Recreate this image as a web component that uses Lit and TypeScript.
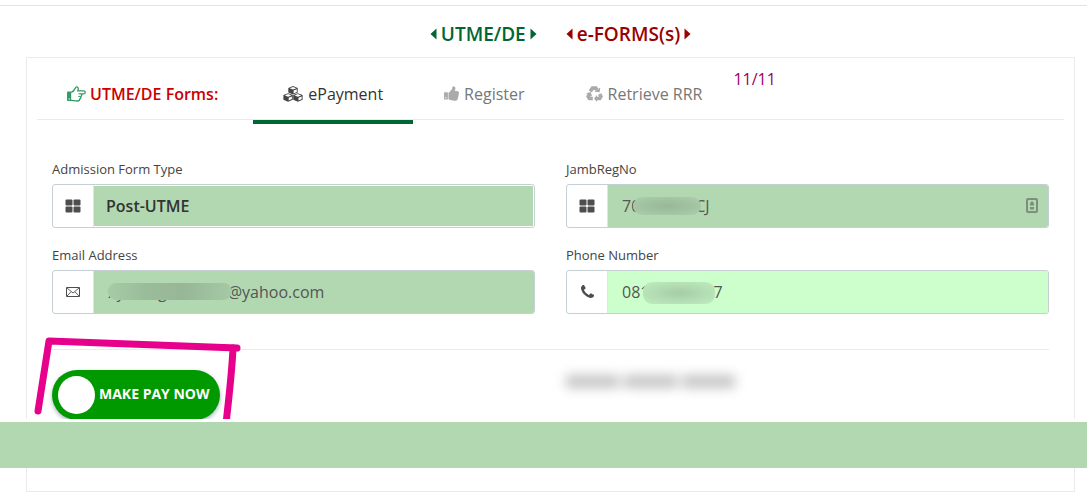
import { LitElement, html, css, svg, nothing, TemplateResult } from "lit";
import { customElement, property } from "lit/decorators.js";

const icons: Record<string, TemplateResult> = {
  hand: html`<svg viewBox="0 0 19 16" width="19" height="16" fill="none" stroke="currentColor" stroke-width="1.3" stroke-linejoin="round" aria-hidden="true">
    <path d="M0.7 6.2H4.2V14.6H0.7z" fill="currentColor" stroke="none"/>
    <path d="M0.7 6.2H4.6C6.4 5.8 7.6 3.6 8.2 2.4C8.6 1 9.3 0.7 10 0.8C11.6 1.1 11.5 3.3 10.7 4.9H16.6C18.8 4.9 18.8 7.8 16.6 7.8H14.2C15.1 8.9 14.7 10 13.7 10.5C14.2 11.6 13.7 12.4 12.8 12.8C12.8 14.3 11.9 15 10.4 15C7.6 15 6.3 14.4 4.2 14.3H0.7z"/>
    <path d="M11.4 7.8H14.2M11.2 10.4h2.5" stroke-width="1"/>
    <circle cx="2.2" cy="13" r="0.7" fill="#fff" stroke="none"/>
  </svg>`,
  cubes: html`<svg viewBox="0 0 20 16" width="20" height="16" aria-hidden="true">
    ${[[5.1, 0], [0.2, 7.2], [10, 7.2]].map(
      ([x, y]) => svg`<g transform=${`translate(${x} ${y})`}>
        <path d="M4.9 0L9.6 1.9V6.5L4.9 8.6L0.2 6.5V1.9z" fill="currentColor"/>
        <path d="M4.9 0.9L8.2 2.2L4.9 3.600L1.600 2.2z" fill="#fff"/>
        <path d="M5.5 4.600L8.700 3.200V5.900L5.5 7.400z" fill="#fff"/>
      </g>`
    )}
  </svg>`,
  thumb: html`<svg viewBox="64 128 1600 1536" width="15" height="15" fill="currentColor" aria-hidden="true">
    <path d="M320 1344q0-26-19-45t-45-19q-27 0-45.500 19t-18.500 45q0 27 18.500 45.500t45.500 18.500q26 0 45-18.500t19-45.500zm160-512v640q0 26-19 45t-45 19h-288q-26 0-45-19t-19-45v-640q0-26 19-45t45-19h288q26 0 45 19t19 45zm1184 0q0 86-55 149 15 44 15 76 3 76-43 137 17 56 0 117-15 57-54 94 9 112-49 181-64 76-197 78h-129q-66 0-144-15.500t-121.500-29-120.500-39.500q-123-43-158-44-26-1-45-19.500t-19-44.500v-641q0-25 18-43.500t43-20.500q24-2 76-59t101-121q68-87 101-120 18-18 31-48t17.500-48.500 13.500-60.500q7-39 12.500-61t19.500-52 34-50q19-19 45-19 46 0 82.500 10.500t60 26 40 40.500 24 45 12 50 5 45 .5 39q0 38-9.500 76t-19 60-27.500 56q-3 6-10 18t-11 22-8 24h277q78 0 135 57t57 135z"/>
  </svg>`,
  recycle: html`<svg viewBox="0 0 17 16" width="17" height="16" aria-hidden="true">
    <g fill="none" stroke="currentColor" stroke-width="3.600">
      <path d="M4.200 5.400L6.500 2.100H9.800L11 4"/>
      <path d="M13.600 8L14.900 10.500L13.700 12.500H10.600"/>
      <path d="M6.800 12.500H3.400L2.200 10.500L3.400 8.400"/>
    </g>
    <g fill="currentColor">
      <path d="M8.400 5.700L13.600 6.300L14.300 1.500z"/>
      <path d="M11 9L8 12.500L11 16z"/>
      <path d="M0 7.400L4.600 6L6.200 10.600z"/>
    </g>
  </svg>`,
  grid: html`<svg viewBox="0 0 16 14" width="16" height="14" fill="currentColor" aria-hidden="true">
    <rect x="0.500" y="0.500" width="7" height="6" rx="1"/><rect x="8.500" y="0.500" width="7" height="6" rx="1"/>
    <rect x="0.500" y="7.500" width="7" height="6" rx="1"/><rect x="8.500" y="7.500" width="7" height="6" rx="1"/>
  </svg>`,
  mail: html`<svg viewBox="0 0 14 10" width="14" height="10" fill="none" stroke="currentColor" aria-hidden="true">
    <path d="M0.500 0.500H13.500V9.500H0.500z"/><path d="M1 1L7 6L13 1M1 9L5 4.800M13 9L9 4.800" stroke-width="0.900"/>
  </svg>`,
  phone: html`<svg viewBox="192 256 1408 1408" width="13" height="13" fill="currentColor" aria-hidden="true">
    <path d="M1600 1368q0 27-10 70.500t-21 68.500q-21 50-122 106-94 51-186 51-27 0-53-3.500t-57.500-12.500-47-14.500-55.500-20.500-49-18q-98-35-175-83-127-79-264-216t-216-264q-48-77-83-175-3-9-18-49t-20.500-55.500-14.500-47-12.500-57.500-3.500-53q0-92 51-186 56-101 106-122 25-11 68.500-21t70.500-10q14 0 21 3 18 6 53 76 11 19 30 54t35 63.500 31 53.500q3 4 17.500 25t21.500 35.500 7 28.500q0 20-28.500 50t-62 55-62 53-28.500 46q0 9 5 22.500t8.500 20.500 14 24 11.500 19q76 137 174 235t235 174q2 1 19 11.500t24 14 20.500 8.500 22.500 5q18 0 46-28.500t53-62 55-62 50-28.500q14 0 28.500 7t35.500 21.500 25 17.500q25 15 53.500 31t63.500 35 54 30q70 35 76 53 3 7 3 21z"/>
  </svg>`,
  contact: html`<svg viewBox="0 0 12 15" width="12" height="15" aria-hidden="true">
    <rect x="1" y="1" width="10" height="13" rx="1" fill="none" stroke="currentColor" stroke-width="2"/>
    <path d="M6 3L8 5.200V7.600H4V5.200zM4 9H8V11.500H4z" fill="currentColor"/>
  </svg>`,
};

const caret = (dir: "left" | "right") => html`<svg viewBox="0 0 7 12" width="7" height="12" fill="currentColor" aria-hidden="true">
  <path d=${dir === "left" ? "M6.500 0.500V11.500L0.500 6z" : "M0.500 0.500V11.500L6.500 6z"}/>
</svg>`;

@customElement("form-field")
class FormField extends LitElement {
  @property() label = "";
  @property() icon = "grid";
  @property() kind: "select" | "text" | "email" | "tel" = "text";
  @property() value = "";
  @property() mask = "";
  @property() trailing = "";
  @property({ type: Boolean, reflect: true }) bright = false;

  static styles = css`
    :host { display: block; min-width: 0; color: #444; }
    label { display: block; font-size: 13px; line-height: 20px; margin-bottom: 5px; }
    .group {
      display: flex; position: relative; box-sizing: border-box; height: 44px;
      border: 1px solid #c5d0d4; border-radius: 3px; overflow: hidden; background: #fff;
    }
    .addon {
      flex: 0 0 40px; display: flex; align-items: center; justify-content: center; padding-bottom: 1px;
      border-right: 1px solid #dde5e8; color: #4d4d4d;
    }
    input, select {
      flex: 1; min-width: 0; border: 0; margin: 0; outline: 0; border-radius: 0; appearance: none;
      background: #b1d8b1; color: #555; font: 400 16px "Open Sans", sans-serif; padding: 0 14px;
    }
    select { margin: 1px; margin-left: 0; padding: 0 12px; color: #333; font-weight: 600; }
    :host([bright]) input { background: #cfc; }
    .mask {
      position: absolute; top: 12px; height: 18px; border-radius: 9px;
      background: radial-gradient(ellipse at center, #98b798, #a9cca9 90%);
    }
    :host([bright]) .mask { top: 11px; height: 22px; background: radial-gradient(ellipse at center, #a6cca6, #bdeabd 90%); }
    .mask-email { left: 55px; width: 124px; height: 17px; background: linear-gradient(90deg, #a6cba6, #9bbc9b 30%, #97b797 60%, #a5c9a5); }
    .mask-jamb { left: 66px; width: 68px; }
    .mask-phone { left: 76px; width: 72px; }
    .trailing { position: absolute; right: 10px; top: 13px; height: 15px; color: #7f8f7f; display: flex; }
  `;

  render() {
    return html`
      <label for="control">${this.label}</label>
      <div class="group">
        <span class="addon">${icons[this.icon]}</span>
        ${this.kind === "select"
          ? html`<select id="control"><option>${this.value}</option></select>`
          : html`<input id="control" type=${this.kind} .value=${this.value} />`}
        ${this.mask ? html`<span class="mask mask-${this.mask}"></span>` : nothing}
        ${this.trailing ? html`<span class="trailing">${icons[this.trailing]}</span>` : nothing}
      </div>
    `;
  }
}

@customElement("app-root")
class AppRoot extends LitElement {
  static styles = css`
    :host {
      display: block; position: relative; padding: 5px 12px 5px 26px; background: #fff;
      font-family: "Open Sans", sans-serif; color: #444; overflow: hidden;
    }
    .rule { height: 1px; margin: 0 -12px 0 -26px; background: #e0e5e5; }
    .titles { display: flex; justify-content: center; gap: 29px; padding-left: 20px; height: 51px; padding-top: 4px; box-sizing: border-box; }
    .title { display: flex; align-items: center; gap: 4px; margin: 0; font-size: 19px; line-height: 24px; font-weight: 600; color: #063; }
    .title-red { color: #900; }
    .card { border: 1px solid #ebebeb; }
    .tabs { display: flex; align-items: stretch; margin: 0 10px; height: 61px; border-bottom: 1px solid #ebebeb; font-size: 16px; line-height: 24px; }
    .tab {
      display: flex; align-items: center; gap: 5px; padding: 10px 30px 0; margin-right: 1px;
      color: #777; text-decoration: none; white-space: nowrap;
    }
    .heading { color: #c00; font-weight: 600; margin-right: 5px; gap: 4px; }
    .heading svg { color: #396; }
    .muted svg { color: #aaa; }
    .active { color: #333; border-bottom: 4px solid #063; margin-bottom: -5px; }
    .active svg { color: #444; }
    .count { color: #906; padding-top: 9px; }
    .form { display: grid; grid-template-columns: 1fr 1fr; gap: 17px 31px; padding: 39px 25px 0; }
    .actions {
      display: grid; grid-template-columns: 1fr 1fr; gap: 31px; margin: 35px 25px 0; padding: 20px 0 71px;
      border-top: 1px solid #ebebeb; position: relative;
    }
    .pay {
      justify-self: start; display: flex; align-items: center; gap: 4px; height: 50px; padding: 0 10px 0 6px;
      border: 0; border-radius: 25px; background: #090; color: #fff; font: 700 14px "Open Sans", sans-serif; line-height: 20px;
      white-space: nowrap; box-shadow: 0 2px 4px rgba(0, 40, 90, 0.35);
    }
    .caption { padding-bottom: 2px; }
    .knob { width: 37px; height: 38px; border-radius: 50%; background: #fff; }
    .redacted { display: flex; gap: 5px; height: 13px; margin-top: 5px; filter: blur(6px); }
    .redacted i { background: #c4c4c4; width: 53px; }
    .marker { position: absolute; left: -20px; top: -14px; pointer-events: none; }
    .band { position: absolute; left: 0; right: 0; bottom: 29px; height: 46px; border-top: 3px solid #fff; background: #b1d8b1; }
  `;

  render() {
    return html`
      <div class="rule"></div>
      <header class="titles">
        <h2 class="title">${caret("left")}UTME/DE${caret("right")}</h2>
        <h2 class="title title-red">${caret("left")}e-FORMS(s)${caret("right")}</h2>
      </header>
      <main class="card">
        <nav class="tabs">
          <span class="tab heading">${icons.hand}UTME/DE Forms:</span>
          <a class="tab active" href="#payment">${icons.cubes}ePayment</a>
          <a class="tab muted" href="#register">${icons.thumb}Register</a>
          <a class="tab muted" href="#retrieve">${icons.recycle}Retrieve RRR</a>
          <span class="count">11/11</span>
        </nav>
        <form class="form">
          <form-field label="Admission Form Type" kind="select" value="Post-UTME"></form-field>
          <form-field label="JambRegNo" value="70000000CJ" mask="jamb" trailing="contact"></form-field>
          <form-field label="Email Address" icon="mail" kind="email" value="xyxxxxgxxxxxoo@yahoo.com" mask="email"></form-field>
          <form-field label="Phone Number" icon="phone" kind="tel" value="08100000007" mask="phone" bright></form-field>
        </form>
        <section class="actions">
          <button class="pay" type="button"><span class="knob"></span><span class="caption">MAKE PAY NOW</span></button>
          <div class="redacted" aria-hidden="true"><i></i><i></i><i></i></div>
          <svg class="marker" viewBox="0 0 216 90" width="216" height="90" fill="none" stroke="#e6008c" stroke-width="7" stroke-linecap="round" stroke-linejoin="round" aria-hidden="true">
            <path d="M6 75L17 5L205 12"/>
            <path d="M201 12C200 36 197 60 194 88"/>
          </svg>
        </section>
      </main>
      <div class="band"></div>
    `;
  }
}
